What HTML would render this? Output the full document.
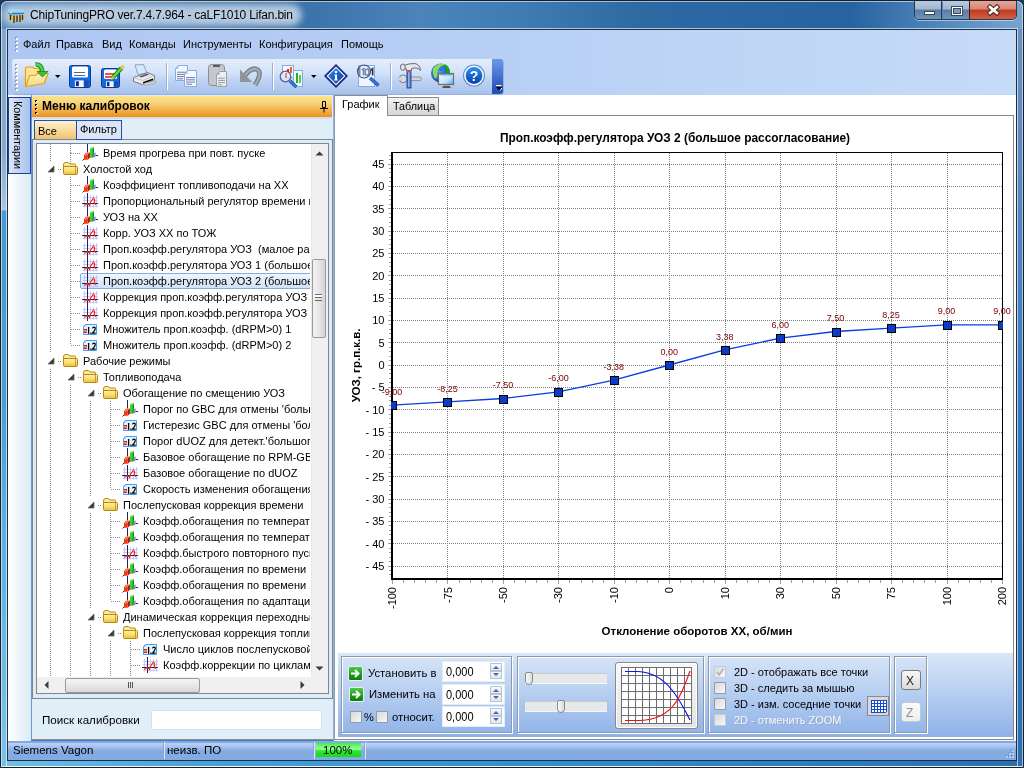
<!DOCTYPE html>
<html><head><meta charset="utf-8">
<style>
*{margin:0;padding:0;box-sizing:border-box}
html,body{width:1024px;height:768px;overflow:hidden;background:#1c3c60}
body{position:relative;font-family:"Liberation Sans",sans-serif;font-size:11px;color:#000}
.a{position:absolute}
.t{position:absolute;white-space:pre;line-height:1}
svg{position:absolute;overflow:visible}
</style></head><body>
<div class="a" style="left:0;top:0;width:1024px;height:768px;overflow:hidden;will-change:transform">
<div class="a" style="left:0;top:0;width:1024px;height:768px;background:#14202c;border-radius:7px 7px 4px 4px"></div>
<div class="a" style="left:1px;top:1px;width:1022px;height:766px;border-radius:6px 6px 3px 3px;background:#3a80c0"></div>
<div class="a" style="left:1px;top:1px;width:1022px;height:28px;border-radius:6px 6px 0 0;background:linear-gradient(to right,#5a8cbc 0px,#3a72aa 300px,#4a84bb 420px,#3f7cb4 520px,#2d69a3 640px,#2763a0 850px,#5b8fc3 960px,#7aa4cf 1022px)"></div>
<div class="a" style="left:2px;top:4px;width:300px;height:22px;border-radius:11px;background:#adc4dc;filter:blur(3px)"></div>
<div class="a" style="left:1px;top:29px;width:6px;height:738px;background:linear-gradient(#82a8d0 0px,#84aad2 120px,#a8c8e0 180px,#a8c8e0 181px,#4a98d0 182px,#4c9cd4 370px,#5ab0e0 500px,#80c0e8 738px)"></div>
<div class="a" style="left:1017px;top:29px;width:6px;height:738px;background:linear-gradient(#6a90c0 0px,#5a88c0 150px,#3478c0 400px,#2a70b0 738px)"></div>
<div class="a" style="left:1px;top:761px;width:1022px;height:6px;background:linear-gradient(to right,#70c0e8 0px,#4aa0d8 200px,#3590d0 500px,#2a70b0 1022px)"></div>
<div class="a" style="left:1px;top:1px;width:1022px;height:766px;border-radius:6px 6px 0 0;border:1px solid rgba(255,255,255,.55);border-bottom-color:rgba(255,255,255,.8)"></div>
<div class="a" style="left:6px;top:28px;width:1012px;height:739px;border:1px solid rgba(255,255,255,.6)"></div>
<div class="a" style="left:7px;top:29px;width:1010px;height:732px;border:1px solid #1a3048;background:linear-gradient(to right,#aec6f2,#b8d0f5 500px,#c6dbf8)"></div>
<svg style="left:0;top:0" width="40" height="30">
<path d="M8 10.5Q8 9 10 9H23L24 10.5V14H12L8 12.5z" fill="#9ad8f8"/><path d="M12 13.5H24" stroke="#1a7ee0" stroke-width="1.5"/>
<path d="M8 12.5L12 14V16L8 15z" fill="#4a9ad8"/>
<path d="M8.5 14V19M12.5 15V22M15.5 15V21M18.5 15V21M21.5 14.5V20M23.5 14V18" stroke="#f2c440" stroke-width="1.6"/>
<path d="M10.5 15V20M14 15.5V23M17 15.5V22M20 15V22M22.5 15V20" stroke="#2a2a2a" stroke-width="1.3"/>
</svg>
<div class="t" style="left:30px;top:9px;font-size:12px;letter-spacing:-0.2px;color:#000;text-shadow:0 0 8px rgba(255,255,255,.9)">ChipTuningPRO ver.7.4.7.964 - caLF1010 Lifan.bin</div>
<div class="a" style="left:914px;top:1px;width:103px;height:19px;border:1px solid #2a3a4c;border-top:none;border-radius:0 0 5px 5px;overflow:hidden;box-shadow:0 1px 0 rgba(255,255,255,.5)">
  <div class="a" style="left:0;top:0;width:27px;height:18px;background:linear-gradient(#b8cbe0 0%,#9fb6d0 45%,#587ca4 50%,#6f95bc 100%);border-right:1px solid #2a3a4c"></div>
  <div class="a" style="left:28px;top:0;width:27px;height:18px;background:linear-gradient(#b8cbe0 0%,#9fb6d0 45%,#587ca4 50%,#6f95bc 100%);border-right:1px solid #4a1a10"></div>
  <div class="a" style="left:55px;top:0;width:48px;height:18px;background:linear-gradient(#e8a496 0%,#d88676 45%,#c23a1c 50%,#d0604a 100%)"></div>
  <div class="a" style="left:9px;top:10px;width:11px;height:4px;background:#fff;border:1px solid #3a4a5a"></div>
  <div class="a" style="left:36px;top:5px;width:12px;height:10px;border:1px solid #3a4a5a;background:#fff"></div>
  <div class="a" style="left:38px;top:7px;width:8px;height:6px;border:1px solid #3a4a5a;background:#7b9bc0"></div>
</div>
<svg style="left:0;top:0" width="1024" height="30"><path d="M990 7L997 13M997 7L990 13" stroke="#4a2a24" stroke-width="4.6" stroke-linecap="square"/><path d="M990 7L997 13M997 7L990 13" stroke="#fff" stroke-width="2.6" stroke-linecap="square"/></svg>
<div class="a" style="left:15px;top:37px;width:2px;height:2px;background:#8a98ac"></div><div class="a" style="left:16px;top:38px;width:2px;height:2px;background:#fff"></div><div class="a" style="left:15px;top:41px;width:2px;height:2px;background:#8a98ac"></div><div class="a" style="left:16px;top:42px;width:2px;height:2px;background:#fff"></div><div class="a" style="left:15px;top:45px;width:2px;height:2px;background:#8a98ac"></div><div class="a" style="left:16px;top:46px;width:2px;height:2px;background:#fff"></div><div class="a" style="left:15px;top:49px;width:2px;height:2px;background:#8a98ac"></div><div class="a" style="left:16px;top:50px;width:2px;height:2px;background:#fff"></div><div class="t" style="left:23px;top:39px;font-size:11px">Файл</div><div class="t" style="left:56px;top:39px;font-size:11px">Правка</div><div class="t" style="left:102px;top:39px;font-size:11px">Вид</div><div class="t" style="left:129px;top:39px;font-size:11px">Команды</div><div class="t" style="left:183px;top:39px;font-size:11px">Инструменты</div><div class="t" style="left:259px;top:39px;font-size:11px">Конфигурация</div><div class="t" style="left:341px;top:39px;font-size:11px">Помощь</div><div class="a" style="left:12px;top:59px;width:491px;height:35px;border-radius:3px;background:linear-gradient(#e4eefb 0%,#d2e2f8 40%,#bfd4f4 60%,#a8c2ec 100%);box-shadow:1px 1px 0 rgba(120,150,200,.5)"></div><div class="a" style="left:492px;top:59px;width:11px;height:35px;border-radius:0 3px 3px 0;background:linear-gradient(#6b95d8,#2a56b0)"></div><div class="a" style="left:15px;top:64px;width:2px;height:2px;background:#8a98ac"></div><div class="a" style="left:16px;top:65px;width:2px;height:2px;background:#fff"></div><div class="a" style="left:15px;top:68px;width:2px;height:2px;background:#8a98ac"></div><div class="a" style="left:16px;top:69px;width:2px;height:2px;background:#fff"></div><div class="a" style="left:15px;top:72px;width:2px;height:2px;background:#8a98ac"></div><div class="a" style="left:16px;top:73px;width:2px;height:2px;background:#fff"></div><div class="a" style="left:15px;top:76px;width:2px;height:2px;background:#8a98ac"></div><div class="a" style="left:16px;top:77px;width:2px;height:2px;background:#fff"></div><div class="a" style="left:15px;top:80px;width:2px;height:2px;background:#8a98ac"></div><div class="a" style="left:16px;top:81px;width:2px;height:2px;background:#fff"></div><div class="a" style="left:15px;top:84px;width:2px;height:2px;background:#8a98ac"></div><div class="a" style="left:16px;top:85px;width:2px;height:2px;background:#fff"></div><div class="a" style="left:15px;top:88px;width:2px;height:2px;background:#8a98ac"></div><div class="a" style="left:16px;top:89px;width:2px;height:2px;background:#fff"></div><div class="a" style="left:166px;top:63px;width:1px;height:27px;background:#9ab0d0"></div><div class="a" style="left:167px;top:63px;width:1px;height:27px;background:#fff"></div><div class="a" style="left:272px;top:63px;width:1px;height:27px;background:#9ab0d0"></div><div class="a" style="left:273px;top:63px;width:1px;height:27px;background:#fff"></div><div class="a" style="left:390px;top:63px;width:1px;height:27px;background:#9ab0d0"></div><div class="a" style="left:391px;top:63px;width:1px;height:27px;background:#fff"></div><div class="a" style="left:8px;top:95px;width:23px;height:646px;background:linear-gradient(to right,#ffffff,#dde9f4)"></div><div class="a" style="left:8px;top:97px;width:23px;height:77px;border:1px solid #1d3f96;background:linear-gradient(to right,#dbe6f7,#a9c2ec)"></div><div class="t" style="left:23px;top:101px;font-size:10.8px;transform-origin:0 0;transform:rotate(90deg)">Комментарии</div><div class="a" style="left:31px;top:95px;width:302px;height:645px;background:#dfeef7;border-left:1px solid #6a95d8"></div><div class="a" style="left:32px;top:96px;width:300px;height:21px;background:linear-gradient(#fbe48c 0%,#f7d680 30%,#f2b854 60%,#ef9c28 90%,#ee9018 100%)"></div><div class="a" style="left:32px;top:117px;width:300px;height:2px;background:#cfe0f5"></div><div class="a" style="left:35px;top:100px;width:2px;height:2px;background:#000"></div><div class="a" style="left:36px;top:101px;width:2px;height:1px;background:#fff8d0"></div><div class="a" style="left:35px;top:104px;width:2px;height:2px;background:#000"></div><div class="a" style="left:36px;top:105px;width:2px;height:1px;background:#fff8d0"></div><div class="a" style="left:35px;top:108px;width:2px;height:2px;background:#000"></div><div class="a" style="left:36px;top:109px;width:2px;height:1px;background:#fff8d0"></div><div class="a" style="left:35px;top:112px;width:2px;height:2px;background:#000"></div><div class="a" style="left:36px;top:113px;width:2px;height:1px;background:#fff8d0"></div><div class="t" style="left:42px;top:100px;font-size:12px;font-weight:bold">Меню калибровок</div><svg style="left:319px;top:100px" width="10" height="13"><path d="M3.5 1.5h3v6h-3z M1 8.5h8 M5 8.5v4" stroke="#000" stroke-width="1" fill="none"/></svg><div class="a" style="left:34px;top:120px;width:43px;height:20px;border:1px solid #2a4da8;border-right:none;border-bottom:none;background:linear-gradient(#fdf2cc,#f7d590 60%,#f3c070)"></div><div class="t" style="left:38px;top:126px;font-size:11px">Все</div><div class="a" style="left:76px;top:120px;width:46px;height:20px;border:1px solid #2a4da8;background:#dae6f5"></div><div class="t" style="left:80px;top:124px;font-size:11px">Фильтр</div><div class="a" style="left:32px;top:139px;width:301px;height:560px;border:1px solid #80868e;border-bottom-width:1px;background:#dcecf8"></div><div class="a" style="left:36px;top:143px;width:293px;height:551px;border:1px solid #80868e;background:#fff"></div><div class="a" style="left:76px;top:139px;width:46px;height:1px;background:#2a4da8"></div><div class="t" style="left:42px;top:714px;font-size:11.6px">Поиск калибровки</div><div class="a" style="left:151px;top:710px;width:171px;height:20px;background:#fff;border:1px solid #d6e2ee"></div><div class="a" style="left:32px;top:739px;width:301px;height:1px;background:#8c8c8c"></div><div class="a" style="left:333px;top:95px;width:1px;height:646px;background:#98b0e8"></div><div class="a" style="left:334px;top:95px;width:682px;height:645px;background:#fff;border-left:1px solid #8e9bab"></div><div class="a" style="left:334px;top:740px;width:682px;height:1px;background:#eef4fc"></div><div class="a" style="left:31px;top:740px;width:303px;height:1px;background:#4a7ad0"></div><div class="a" style="left:8px;top:741px;width:1008px;height:19px;background:linear-gradient(#84a8e0 0px,#84a8e0 2px,#bcd4f6 2px,#a4c0ec 6px,#84aae2 10px,#84aae2 19px)"></div><div class="t" style="left:13px;top:745px;font-size:11.5px">Siemens Vagon</div><div class="t" style="left:167px;top:745px;font-size:11.5px">неизв. ПО</div><div class="a" style="left:163px;top:742px;width:1px;height:17px;background:#8aa6d0"></div><div class="a" style="left:164px;top:742px;width:1px;height:17px;background:#dce8fa"></div><div class="a" style="left:313px;top:742px;width:1px;height:17px;background:#8aa6d0"></div><div class="a" style="left:314px;top:742px;width:1px;height:17px;background:#dce8fa"></div><div class="a" style="left:364px;top:742px;width:1px;height:17px;background:#8aa6d0"></div><div class="a" style="left:365px;top:742px;width:1px;height:17px;background:#dce8fa"></div><div class="a" style="left:316px;top:743px;width:45px;height:14px;background:linear-gradient(#40f040,#9cff9c 45%,#2ee82e 55%,#1ad81a)"></div><div class="t" style="left:323px;top:745px;font-size:11.5px">100%</div><div class="a" style="left:1012px;top:750px;width:2px;height:2px;background:#b4caee;box-shadow:-1px -1px 0 #7496cc"></div><div class="a" style="left:1009px;top:753px;width:2px;height:2px;background:#b4caee;box-shadow:-1px -1px 0 #7496cc"></div><div class="a" style="left:1012px;top:753px;width:2px;height:2px;background:#b4caee;box-shadow:-1px -1px 0 #7496cc"></div><div class="a" style="left:1006px;top:756px;width:2px;height:2px;background:#b4caee;box-shadow:-1px -1px 0 #7496cc"></div><div class="a" style="left:1009px;top:756px;width:2px;height:2px;background:#b4caee;box-shadow:-1px -1px 0 #7496cc"></div><div class="a" style="left:1012px;top:756px;width:2px;height:2px;background:#b4caee;box-shadow:-1px -1px 0 #7496cc"></div><div class="a" style="left:387px;top:97px;width:52px;height:19px;border:1px solid #8a8a8a;border-left:none;background:linear-gradient(#f4f4f4,#e2e2e2 50%,#d6d6d6)"></div><div class="a" style="left:439px;top:115px;width:575px;height:1px;background:#8a8a8a"></div><div class="a" style="left:334px;top:95px;width:54px;height:21px;border:1px solid #8a8a8a;border-bottom:none;background:#fff"></div><div class="a" style="left:1013px;top:115px;width:1px;height:625px;background:#8a8a8a"></div><div class="a" style="left:334px;top:739px;width:680px;height:1px;background:#8a8a8a"></div><div class="t" style="left:342px;top:99px;font-size:11px">График</div><div class="t" style="left:393px;top:101px;font-size:10.8px">Таблица</div><svg style="left:0;top:0" width="1024" height="768" shape-rendering="crispEdges"><path d="M393 566.5H1002M393 543.5H1002M393 521.5H1002M393 499.5H1002M393 476.5H1002M393 454.5H1002M393 432.5H1002M393 409.5H1002M393 387.5H1002M393 365.5H1002M393 342.5H1002M393 320.5H1002M393 298.5H1002M393 275.5H1002M393 253.5H1002M393 231.5H1002M393 208.5H1002M393 186.5H1002M393 164.5H1002M447.5 153V578M503.5 153V578M558.5 153V578M614.5 153V578M669.5 153V578M725.5 153V578M780.5 153V578M836.5 153V578M891.5 153V578M947.5 153V578" stroke="#808080" stroke-width="1" stroke-dasharray="1 1" fill="none"/><path d="M389 574.5H391M389 570.5H391M388 566.5H391M389 561.5H391M389 557.5H391M389 552.5H391M389 548.5H391M388 543.5H391M389 539.5H391M389 534.5H391M389 530.5H391M389 525.5H391M388 521.5H391M389 516.5H391M389 512.5H391M389 507.5H391M389 503.5H391M388 499.5H391M389 494.5H391M389 490.5H391M389 485.5H391M389 481.5H391M388 476.5H391M389 472.5H391M389 467.5H391M389 463.5H391M389 458.5H391M388 454.5H391M389 449.5H391M389 445.5H391M389 440.5H391M389 436.5H391M388 432.5H391M389 427.5H391M389 423.5H391M389 418.5H391M389 414.5H391M388 409.5H391M389 405.5H391M389 400.5H391M389 396.5H391M389 391.5H391M388 387.5H391M389 382.5H391M389 378.5H391M389 373.5H391M389 369.5H391M388 365.5H391M389 360.5H391M389 356.5H391M389 351.5H391M389 347.5H391M388 342.5H391M389 338.5H391M389 333.5H391M389 329.5H391M389 324.5H391M388 320.5H391M389 315.5H391M389 311.5H391M389 306.5H391M389 302.5H391M388 298.5H391M389 293.5H391M389 289.5H391M389 284.5H391M389 280.5H391M388 275.5H391M389 271.5H391M389 266.5H391M389 262.5H391M389 257.5H391M388 253.5H391M389 248.5H391M389 244.5H391M389 239.5H391M389 235.5H391M388 231.5H391M389 226.5H391M389 222.5H391M389 217.5H391M389 213.5H391M388 208.5H391M389 204.5H391M389 199.5H391M389 195.5H391M389 190.5H391M388 186.5H391M389 181.5H391M389 177.5H391M389 172.5H391M389 168.5H391M388 164.5H391M389 159.5H391M389 155.5H391M392.5 580V584M403.5 580V583M414.5 580V583M425.5 580V583M436.5 580V583M447.5 580V584M459.5 580V583M470.5 580V583M481.5 580V583M492.5 580V583M503.5 580V584M514.5 580V583M525.5 580V583M536.5 580V583M547.5 580V583M558.5 580V584M569.5 580V583M581.5 580V583M592.5 580V583M603.5 580V583M614.5 580V584M625.5 580V583M636.5 580V583M647.5 580V583M658.5 580V583M669.5 580V584M680.5 580V583M691.5 580V583M703.5 580V583M714.5 580V583M725.5 580V584M736.5 580V583M747.5 580V583M758.5 580V583M769.5 580V583M780.5 580V584M791.5 580V583M802.5 580V583M813.5 580V583M825.5 580V583M836.5 580V584M847.5 580V583M858.5 580V583M869.5 580V583M880.5 580V583M891.5 580V584M902.5 580V583M913.5 580V583M924.5 580V583M935.5 580V583M947.5 580V584M958.5 580V583M969.5 580V583M980.5 580V583M991.5 580V583M1002.5 580V584" stroke="#a0a0a0" stroke-width="1" fill="none"/><path d="M391 152H1003M1002.5 152V580" stroke="#000" stroke-width="1" fill="none"/><rect x="391" y="152" width="2" height="428" fill="#000"/><rect x="391" y="578" width="612" height="2" fill="#000"/></svg><svg style="left:0;top:0" width="1024" height="768"><text x="675" y="142" font-family="Liberation Sans" font-size="11.9" font-weight="bold" text-anchor="middle">Проп.коэфф.регулятора УОЗ 2 (большое рассогласование)</text><text x="697" y="634.5" font-family="Liberation Sans" font-size="11.5" font-weight="bold" text-anchor="middle">Отклонение оборотов ХХ, об/мин</text><text transform="translate(360 365.4) rotate(-90)" font-family="Liberation Sans" font-size="11.5" font-weight="bold" text-anchor="middle">УОЗ, гр.п.к.в.</text><text x="384.5" y="570.0" font-family="Liberation Sans" font-size="11" text-anchor="end">- 45</text><text x="384.5" y="547.7" font-family="Liberation Sans" font-size="11" text-anchor="end">- 40</text><text x="384.5" y="525.3" font-family="Liberation Sans" font-size="11" text-anchor="end">- 35</text><text x="384.5" y="503.0" font-family="Liberation Sans" font-size="11" text-anchor="end">- 30</text><text x="384.5" y="480.7" font-family="Liberation Sans" font-size="11" text-anchor="end">- 25</text><text x="384.5" y="458.3" font-family="Liberation Sans" font-size="11" text-anchor="end">- 20</text><text x="384.5" y="436.0" font-family="Liberation Sans" font-size="11" text-anchor="end">- 15</text><text x="384.5" y="413.7" font-family="Liberation Sans" font-size="11" text-anchor="end">- 10</text><text x="384.5" y="391.3" font-family="Liberation Sans" font-size="11" text-anchor="end">- 5</text><text x="384.5" y="369.0" font-family="Liberation Sans" font-size="11" text-anchor="end">0</text><text x="384.5" y="346.7" font-family="Liberation Sans" font-size="11" text-anchor="end">5</text><text x="384.5" y="324.3" font-family="Liberation Sans" font-size="11" text-anchor="end">10</text><text x="384.5" y="302.0" font-family="Liberation Sans" font-size="11" text-anchor="end">15</text><text x="384.5" y="279.7" font-family="Liberation Sans" font-size="11" text-anchor="end">20</text><text x="384.5" y="257.3" font-family="Liberation Sans" font-size="11" text-anchor="end">25</text><text x="384.5" y="235.0" font-family="Liberation Sans" font-size="11" text-anchor="end">30</text><text x="384.5" y="212.7" font-family="Liberation Sans" font-size="11" text-anchor="end">35</text><text x="384.5" y="190.3" font-family="Liberation Sans" font-size="11" text-anchor="end">40</text><text x="384.5" y="168.0" font-family="Liberation Sans" font-size="11" text-anchor="end">45</text><text transform="translate(396.0 587) rotate(-90)" font-family="Liberation Sans" font-size="11" text-anchor="end">-100</text><text transform="translate(451.5 587) rotate(-90)" font-family="Liberation Sans" font-size="11" text-anchor="end">-75</text><text transform="translate(506.9 587) rotate(-90)" font-family="Liberation Sans" font-size="11" text-anchor="end">-50</text><text transform="translate(562.4 587) rotate(-90)" font-family="Liberation Sans" font-size="11" text-anchor="end">-30</text><text transform="translate(617.8 587) rotate(-90)" font-family="Liberation Sans" font-size="11" text-anchor="end">-10</text><text transform="translate(673.3 587) rotate(-90)" font-family="Liberation Sans" font-size="11" text-anchor="end">0</text><text transform="translate(728.7 587) rotate(-90)" font-family="Liberation Sans" font-size="11" text-anchor="end">10</text><text transform="translate(784.2 587) rotate(-90)" font-family="Liberation Sans" font-size="11" text-anchor="end">30</text><text transform="translate(839.6 587) rotate(-90)" font-family="Liberation Sans" font-size="11" text-anchor="end">50</text><text transform="translate(895.1 587) rotate(-90)" font-family="Liberation Sans" font-size="11" text-anchor="end">75</text><text transform="translate(950.5 587) rotate(-90)" font-family="Liberation Sans" font-size="11" text-anchor="end">100</text><text transform="translate(1006.0 587) rotate(-90)" font-family="Liberation Sans" font-size="11" text-anchor="end">200</text><polyline points="392.0,405.2 447.5,401.9 502.9,398.5 558.4,391.8 613.8,380.1 669.3,365.0 724.7,349.9 780.2,338.2 835.6,331.5 891.1,328.2 946.5,324.8 1002.0,324.8" fill="none" stroke="#0a3ce0" stroke-width="1.3"/></svg><svg style="left:0;top:0" width="1024" height="768" shape-rendering="crispEdges"><defs><clipPath id="pc"><rect x="391" y="152" width="612" height="428"/></clipPath></defs><g clip-path="url(#pc)"><rect x="388.5" y="401.5" width="8" height="8" fill="#0a3cc8" stroke="#000" stroke-width="1"/><rect x="443.5" y="398.5" width="8" height="8" fill="#0a3cc8" stroke="#000" stroke-width="1"/><rect x="499.5" y="395.5" width="8" height="8" fill="#0a3cc8" stroke="#000" stroke-width="1"/><rect x="554.5" y="388.5" width="8" height="8" fill="#0a3cc8" stroke="#000" stroke-width="1"/><rect x="610.5" y="376.5" width="8" height="8" fill="#0a3cc8" stroke="#000" stroke-width="1"/><rect x="665.5" y="361.5" width="8" height="8" fill="#0a3cc8" stroke="#000" stroke-width="1"/><rect x="721.5" y="346.5" width="8" height="8" fill="#0a3cc8" stroke="#000" stroke-width="1"/><rect x="776.5" y="334.5" width="8" height="8" fill="#0a3cc8" stroke="#000" stroke-width="1"/><rect x="832.5" y="328.5" width="8" height="8" fill="#0a3cc8" stroke="#000" stroke-width="1"/><rect x="887.5" y="324.5" width="8" height="8" fill="#0a3cc8" stroke="#000" stroke-width="1"/><rect x="943.5" y="321.5" width="8" height="8" fill="#0a3cc8" stroke="#000" stroke-width="1"/><rect x="998.5" y="321.5" width="8" height="8" fill="#0a3cc8" stroke="#000" stroke-width="1"/></g><text x="392.0" y="394.8" font-family="Liberation Sans" font-size="9" fill="#7a0000" text-anchor="middle" shape-rendering="auto">-9,00</text><text x="447.5" y="391.5" font-family="Liberation Sans" font-size="9" fill="#7a0000" text-anchor="middle" shape-rendering="auto">-8,25</text><text x="502.9" y="388.1" font-family="Liberation Sans" font-size="9" fill="#7a0000" text-anchor="middle" shape-rendering="auto">-7,50</text><text x="558.4" y="381.4" font-family="Liberation Sans" font-size="9" fill="#7a0000" text-anchor="middle" shape-rendering="auto">-6,00</text><text x="613.8" y="369.7" font-family="Liberation Sans" font-size="9" fill="#7a0000" text-anchor="middle" shape-rendering="auto">-3,38</text><text x="669.3" y="354.6" font-family="Liberation Sans" font-size="9" fill="#7a0000" text-anchor="middle" shape-rendering="auto">0,00</text><text x="724.7" y="339.5" font-family="Liberation Sans" font-size="9" fill="#7a0000" text-anchor="middle" shape-rendering="auto">3,38</text><text x="780.2" y="327.8" font-family="Liberation Sans" font-size="9" fill="#7a0000" text-anchor="middle" shape-rendering="auto">6,00</text><text x="835.6" y="321.1" font-family="Liberation Sans" font-size="9" fill="#7a0000" text-anchor="middle" shape-rendering="auto">7,50</text><text x="891.1" y="317.8" font-family="Liberation Sans" font-size="9" fill="#7a0000" text-anchor="middle" shape-rendering="auto">8,25</text><text x="946.5" y="314.4" font-family="Liberation Sans" font-size="9" fill="#7a0000" text-anchor="middle" shape-rendering="auto">9,00</text><text x="1002.0" y="314.4" font-family="Liberation Sans" font-size="9" fill="#7a0000" text-anchor="middle" shape-rendering="auto">9,00</text></svg><div class="a" style="left:338px;top:653px;width:675px;height:84px;background:linear-gradient(#d8e6f8 0%,#bcd2f2 40%,#8eb2e8 100%)"></div><div class="a" style="left:341px;top:656px;width:171px;height:77px;border:1px solid #8e98a8;box-shadow:inset 1px 1px 0 #fff,1px 1px 0 #fff"></div><div class="a" style="left:517px;top:656px;width:187px;height:77px;border:1px solid #8e98a8;box-shadow:inset 1px 1px 0 #fff,1px 1px 0 #fff"></div><div class="a" style="left:708px;top:656px;width:182px;height:77px;border:1px solid #8e98a8;box-shadow:inset 1px 1px 0 #fff,1px 1px 0 #fff"></div><div class="a" style="left:894px;top:656px;width:33px;height:77px;border:1px solid #8e98a8;box-shadow:inset 1px 1px 0 #fff,1px 1px 0 #fff"></div><div class="a" style="left:348px;top:666px;width:15px;height:15px;border-radius:2px;border:1px solid #e8f4e8;background:linear-gradient(#4cc84c,#1e9a1e 60%,#0c7e0c)"></div><svg style="left:348px;top:666px" width="15" height="15"><path d="M3 7.5H10M7 4L10.5 7.5L7 11" stroke="#fff" stroke-width="2" fill="none"/></svg><div class="a" style="left:349px;top:687px;width:15px;height:15px;border-radius:2px;border:1px solid #e8f4e8;background:linear-gradient(#4cc84c,#1e9a1e 60%,#0c7e0c)"></div><svg style="left:349px;top:687px" width="15" height="15"><path d="M3 7.5H10M7 4L10.5 7.5L7 11" stroke="#fff" stroke-width="2" fill="none"/></svg><div class="t" style="left:368px;top:668px;font-size:11.3px">Установить в</div><div class="t" style="left:369px;top:689px;font-size:11.3px">Изменить на</div><div class="a" style="left:350px;top:711px;width:12px;height:12px;border:1px solid #979ca4;background:linear-gradient(135deg,#d8dadc,#f6f7f8)"></div><div class="t" style="left:364px;top:712px;font-size:11px">%</div><div class="a" style="left:376px;top:711px;width:12px;height:12px;border:1px solid #979ca4;background:linear-gradient(135deg,#d8dadc,#f6f7f8)"></div><div class="t" style="left:392px;top:712px;font-size:11.3px">относит.</div><div class="a" style="left:442px;top:661px;width:63px;height:21px;background:#fff;border:1px solid #e4ecf4"></div><div class="t" style="left:446px;top:666px;font-size:11px;transform:scaleY(1.08);transform-origin:0 0">0,000</div><div class="a" style="left:490px;top:663px;width:12px;height:8px;border:1px solid #b8c4d4;background:linear-gradient(#f8fafc,#dde4ee)"></div><div class="a" style="left:490px;top:671px;width:12px;height:8px;border:1px solid #b8c4d4;background:linear-gradient(#f8fafc,#dde4ee)"></div><svg style="left:490px;top:663px" width="12" height="16"><path d="M3 6L6 3L9 6z M3 10L6 13L9 10z" fill="#4a64b0"/></svg><div class="a" style="left:442px;top:684px;width:63px;height:21px;background:#fff;border:1px solid #e4ecf4"></div><div class="t" style="left:446px;top:689px;font-size:11px;transform:scaleY(1.08);transform-origin:0 0">0,000</div><div class="a" style="left:490px;top:686px;width:12px;height:8px;border:1px solid #b8c4d4;background:linear-gradient(#f8fafc,#dde4ee)"></div><div class="a" style="left:490px;top:694px;width:12px;height:8px;border:1px solid #b8c4d4;background:linear-gradient(#f8fafc,#dde4ee)"></div><svg style="left:490px;top:686px" width="12" height="16"><path d="M3 6L6 3L9 6z M3 10L6 13L9 10z" fill="#4a64b0"/></svg><div class="a" style="left:442px;top:706px;width:63px;height:21px;background:#fff;border:1px solid #e4ecf4"></div><div class="t" style="left:446px;top:711px;font-size:11px;transform:scaleY(1.08);transform-origin:0 0">0,000</div><div class="a" style="left:490px;top:708px;width:12px;height:8px;border:1px solid #b8c4d4;background:linear-gradient(#f8fafc,#dde4ee)"></div><div class="a" style="left:490px;top:716px;width:12px;height:8px;border:1px solid #b8c4d4;background:linear-gradient(#f8fafc,#dde4ee)"></div><svg style="left:490px;top:708px" width="12" height="16"><path d="M3 6L6 3L9 6z M3 10L6 13L9 10z" fill="#4a64b0"/></svg><div class="a" style="left:525px;top:673px;width:82px;height:11px;background:#e6e8ea;border-top:1px solid #c8ccd0;border-bottom:1px solid #f4f6f8"></div><div class="a" style="left:525px;top:672px;width:8px;height:13px;border:1px solid #8a8a8a;border-radius:2px 2px 4px 4px;background:linear-gradient(to right,#fafafa,#dadada)"></div><div class="a" style="left:525px;top:701px;width:82px;height:11px;background:#e6e8ea;border-top:1px solid #c8ccd0;border-bottom:1px solid #f4f6f8"></div><div class="a" style="left:557px;top:700px;width:8px;height:13px;border:1px solid #8a8a8a;border-radius:2px 2px 4px 4px;background:linear-gradient(to right,#fafafa,#dadada)"></div><div class="a" style="left:615px;top:662px;width:83px;height:67px;border:1px solid #8a8a8a;border-radius:3px;background:linear-gradient(#f8f8f8,#e4e4e4);box-shadow:inset 0 0 0 1px #fff"></div><svg style="left:0;top:0" width="1024" height="768"><rect x="621" y="667" width="71" height="56" fill="#fff"/><path d="M621.5 667V723M628.5 667V723M635.5 667V723M642.5 667V723M649.5 667V723M656.5 667V723M663.5 667V723M670.5 667V723M677.5 667V723M684.5 667V723M691.5 667V723M621 667.5H692M621 675.5H692M621 683.5H692M621 691.5H692M621 699.5H692M621 707.5H692M621 715.5H692M621 723.5H692" stroke="#6e6e6e" stroke-width="1" shape-rendering="crispEdges"/><path d="M625 671.5H638C652 672 664 680 672 690C680 700 686 712 690 720" stroke="#1010e8" stroke-width="1.2" fill="none"/><path d="M625 720.5H640C655 720 668 714 676 702C682 694 686 682 690 671" stroke="#f01010" stroke-width="1.2" fill="none"/></svg><div class="a" style="left:714px;top:666px;width:12px;height:12px;border:1px solid #c4ccd8;background:linear-gradient(135deg,#d8dadc,#f6f7f8)"></div><svg style="left:714px;top:666px" width="12" height="12"><path d="M3 6L5 9L9.5 2.5" stroke="#a8b0bc" stroke-width="1.5" fill="none"/></svg><div class="t" style="left:734px;top:667px;font-size:11px;color:#000">2D - отображать все точки</div><div class="a" style="left:714px;top:682px;width:12px;height:12px;border:1px solid #979ca4;background:linear-gradient(135deg,#d8dadc,#f6f7f8)"></div><div class="t" style="left:734px;top:683px;font-size:11px;color:#000">3D - следить за мышью</div><div class="a" style="left:714px;top:698px;width:12px;height:12px;border:1px solid #979ca4;background:linear-gradient(135deg,#d8dadc,#f6f7f8)"></div><div class="t" style="left:734px;top:699px;font-size:11px;color:#000">3D - изм. соседние точки</div><div class="a" style="left:714px;top:714px;width:12px;height:12px;border:1px solid #c4ccd8;background:linear-gradient(135deg,#d8dadc,#f6f7f8)"></div><div class="t" style="left:734px;top:715px;font-size:11px;color:#f4f8ff;text-shadow:1px 1px 0 #9aa8bc">2D - отменить ZOOM</div><div class="a" style="left:867px;top:696px;width:22px;height:20px;border:1px solid #8a8a8a;background:#d8d8d8"></div><svg style="left:0;top:0" width="1024" height="768"><rect x="871" y="700" width="15" height="12" fill="#fff"/><path d="M871.5 700V712M874.5 700V712M877.5 700V712M880.5 700V712M883.5 700V712M886.5 700V712M871 700.5H886M871 703.5H886M871 706.5H886M871 709.5H886M871 712.5H886" stroke="#1848d0" stroke-width="1.2" shape-rendering="crispEdges"/></svg><div class="a" style="left:901px;top:670px;width:20px;height:20px;border:1px solid #7a7a7a;border-radius:3px;background:linear-gradient(#f6f6f6,#dcdcdc)"></div><div class="t" style="left:906px;top:675px;font-size:12px;color:#222">X</div><div class="a" style="left:901px;top:702px;width:20px;height:20px;border:1px solid #c0c8d4;border-radius:3px;background:linear-gradient(#fafafa,#eeeeee)"></div><div class="t" style="left:906px;top:707px;font-size:12px;color:#8a9098">Z</div><svg style="left:0;top:0" width="1024" height="768"><defs><linearGradient id="tbfold" x1="0" y1="0" x2="0" y2="1"><stop offset="0" stop-color="#fdf0b8"/><stop offset="1" stop-color="#f6d880"/></linearGradient><linearGradient id="blu" x1="0" y1="0" x2="1" y2="1"><stop offset="0" stop-color="#2a8cf0"/><stop offset="1" stop-color="#0a3aa8"/></linearGradient><linearGradient id="scr" x1="0" y1="0" x2="1" y2="1"><stop offset="0" stop-color="#f8fcff"/><stop offset="0.6" stop-color="#c0e4fc"/><stop offset="1" stop-color="#3aa8f0"/></linearGradient><radialGradient id="glob" cx="0.35" cy="0.35" r="0.7"><stop offset="0" stop-color="#5ab0ff"/><stop offset="1" stop-color="#0a38a0"/></radialGradient><linearGradient id="tbend" x1="0" y1="0" x2="0" y2="1"><stop offset="0" stop-color="#6a98e8"/><stop offset="1" stop-color="#1e4cb4"/></linearGradient><linearGradient id="hlp" x1="0" y1="0" x2="0" y2="1"><stop offset="0" stop-color="#2a90f2"/><stop offset="1" stop-color="#0840a8"/></linearGradient></defs><g transform="translate(22 60)"><path d="M3.5 26V8.5Q3.5 7 5 7H10.5L12 8.5H17.5V13" fill="#fbe49a" stroke="#e8a010" stroke-width="1.2"/><path d="M3.8 26.5L7.5 15.5H13L16 13.5H26L22 23.5z" fill="url(#tbfold)" stroke="#e8a010" stroke-width="1.2"/><path d="M13.5 4.5Q19.5 4 20.5 11.5" stroke="#1a9a1a" stroke-width="4.5" fill="none"/><path d="M13.5 4.5Q19.5 4 20.5 11.5" stroke="#5ad25a" stroke-width="2.2" fill="none"/><path d="M15 11.5H26L20.5 17z" fill="#3cc03c" stroke="#108a10" stroke-width="0.8"/></g><path d="M55 75H60.5L57.75 78z" fill="#000"/><path d="M311 75H316.5L313.75 78z" fill="#000"/><g transform="translate(69 65)"><rect x="0.5" y="0.5" width="21" height="22" rx="2" fill="#0c6ee0" stroke="#22308a" stroke-width="1"/><rect x="3" y="1.5" width="16" height="11.0" rx="1.5" fill="#fff"/><path d="M5 7.5H16M5 10.5H16" stroke="#6060b0" stroke-width="1"/><rect x="5.880000000000001" y="15.399999999999999" width="8.82" height="6.6" fill="#f4f8ff"/><rect x="6.930000000000001" y="16.28" width="2.9400000000000004" height="4.84" fill="#1a2a8a"/><rect x="15.12" y="15.399999999999999" width="4.62" height="6.16" fill="#1a3a9a" opacity="0.6"/></g><g transform="translate(101 68)"><rect x="0.5" y="0.5" width="18" height="19" rx="2" fill="#0c6ee0" stroke="#22308a" stroke-width="1"/><rect x="3" y="1.5" width="13" height="9.5" rx="1.5" fill="#fff"/><path d="M4 6H13M4 9H13" stroke="#e81a10" stroke-width="1.4"/><rect x="5.040000000000001" y="13.299999999999999" width="7.56" height="5.7" fill="#f4f8ff"/><rect x="5.94" y="14.06" width="2.5200000000000005" height="4.18" fill="#1a2a8a"/><rect x="12.959999999999999" y="13.299999999999999" width="3.96" height="5.32" fill="#1a3a9a" opacity="0.6"/></g><path d="M112.5 78L121.5 68" stroke="#1a8a1a" stroke-width="4.2"/><path d="M112.5 78L121.5 68" stroke="#6ad84a" stroke-width="2.2"/><path d="M120.5 66L123.5 64.5L124.5 67.5L122.5 69.5z" fill="#f0c070"/><path d="M111 80L112 76L114.5 78.5z" fill="#f0b060"/><g transform="translate(130 60)"><path d="M5 5L13.5 4.5L17 13L8 14.5z" fill="#d4eaff" stroke="#8a8ab0" stroke-width="0.8"/><path d="M3.5 17.5L17.5 12.5L24.5 15.5V19.5L12.5 24.5L3.5 21.5z" fill="#ececec" stroke="#7a7a7a" stroke-width="1"/><path d="M3.5 17.5L12.5 20.5L24.5 15.5" fill="none" stroke="#b8b8b8" stroke-width="0.8"/><path d="M9 16.5L17 13.5L19.5 14.5L11.5 17.5z" fill="#5a5a7a"/><path d="M13 22L23 18.5V20L13 23.5z" fill="#000"/><path d="M14 23.5L25.5 21V23L15 25.5z" fill="#e4e4e4" stroke="#8a8a8a" stroke-width="0.6"/></g><path d="M178.5 65.5H187.5V80.5H175.5V69z" fill="#f4faff" stroke="#84aee0" stroke-width="1"/><path d="M175.5 69H178.5V65.5" fill="#84aee0" opacity="0.7"/><path d="M177 72.22H186" stroke="#4a4a9a" stroke-width="1" opacity="0.75"/><path d="M177 74.42H186" stroke="#4a4a9a" stroke-width="1" opacity="0.75"/><path d="M177 76.62H186" stroke="#4a4a9a" stroke-width="1" opacity="0.75"/><path d="M177 78.82H183" stroke="#4a4a9a" stroke-width="1" opacity="0.75"/><path d="M187.5 70.5H196.5V86.5H184.5V74z" fill="#f4faff" stroke="#84aee0" stroke-width="1"/><path d="M184.5 74H187.5V70.5" fill="#84aee0" opacity="0.7"/><path d="M186 77.64H195" stroke="#4a4a9a" stroke-width="1" opacity="0.75"/><path d="M186 79.84H195" stroke="#4a4a9a" stroke-width="1" opacity="0.75"/><path d="M186 82.04H195" stroke="#4a4a9a" stroke-width="1" opacity="0.75"/><path d="M186 84.24H192" stroke="#4a4a9a" stroke-width="1" opacity="0.75"/><rect x="208.5" y="64.5" width="16" height="21" rx="3" fill="#c4c8cc" stroke="#8a9098" stroke-width="1"/><path d="M213 66H220" stroke="#5a5e64" stroke-width="2"/><path d="M219.5 71.5H226.5V86.5H216.5V75z" fill="#eceef0" stroke="#9aa0a8" stroke-width="1"/><path d="M216.5 75H219.5V71.5" fill="#9aa0a8" opacity="0.7"/><path d="M218 78.22H225" stroke="#7a7e84" stroke-width="1" opacity="0.75"/><path d="M218 80.42H225" stroke="#7a7e84" stroke-width="1" opacity="0.75"/><path d="M218 82.62H225" stroke="#7a7e84" stroke-width="1" opacity="0.75"/><path d="M218 84.82H222" stroke="#7a7e84" stroke-width="1" opacity="0.75"/><path d="M244.5 76Q252 66 258 70Q262 74 255 85" stroke="#7e848c" stroke-width="5" fill="none"/><path d="M244.5 76Q252 66 258 70Q262 74 255 85" stroke="#a8aeb4" stroke-width="2" fill="none"/><path d="M240 69.5V82H252z" fill="#8e949a"/><g transform="translate(277 60)"><rect x="5.5" y="5.5" width="11" height="12" fill="#f4faff" stroke="#84aee0"/><rect x="10" y="9" width="2" height="4" fill="#f02010"/><rect x="13" y="7" width="2" height="6" fill="#f06020"/><rect x="16.5" y="10.5" width="9" height="16" fill="#f4faff" stroke="#84aee0"/><rect x="19" y="13" width="2" height="10" fill="#20b020"/><rect x="22" y="15" width="2" height="8" fill="#50d040"/><path d="M13 21L19.5 27" stroke="#1a4ab0" stroke-width="3.2"/><path d="M13 21L19.5 27" stroke="#3a8ae8" stroke-width="1.4"/><circle cx="8.5" cy="16.5" r="5.3" fill="#d8f0ff" fill-opacity="0.75" stroke="#5a5a8a" stroke-width="1.2"/><rect x="8" y="13" width="2" height="5" fill="#f08070"/></g><path d="M336 64L348 76L336 88L324 76z" fill="#1a2a7a"/><path d="M336 66.5L345.5 76L336 85.5L326.5 76z" fill="#fff"/><path d="M336 68L344 76L336 84L328 76z" fill="url(#blu)"/><circle cx="336" cy="72" r="1.3" fill="#fff"/><path d="M334.5 74.5H337V79.5H338V80.5H334V79.5H335V75.5H334.5z" fill="#fff"/><rect x="358.5" y="65.5" width="16" height="21" fill="#eef6ff" stroke="#84aee0"/><path d="M357.8 70.2L359.6 68.8V75.5M361.8 70.2L363.6 68.8V75.5M370.8 70.2L372.6 68.8V75.5" stroke="#26365e" stroke-width="1.7" fill="none"/><ellipse cx="367" cy="72.2" rx="1.9" ry="3.1" stroke="#26365e" stroke-width="1.5" fill="none"/><path d="M370 78L378.5 85.5" stroke="#1a4ab0" stroke-width="3.4"/><path d="M370 78L378.5 85.5" stroke="#3a8ae8" stroke-width="1.4"/><circle cx="364" cy="71.5" r="6.5" fill="#d8f0ff" fill-opacity="0.45" stroke="#4a4a7a" stroke-width="1.2"/><rect x="404.5" y="77" width="16.5" height="3.6" rx="1" fill="#d6d6d8" stroke="#86868c" stroke-width="0.9"/><circle cx="403.2" cy="78.8" r="3.9" fill="#dcdcde" stroke="#76767e" stroke-width="1"/><rect x="398.5" y="77.4" width="4" height="2.8" fill="#c4d6f2"/><rect x="407" y="70.5" width="4" height="17.5" fill="#3a7ae0" stroke="#34447a" stroke-width="0.9"/><rect x="408.2" y="72" width="1.3" height="15" fill="#9cc4f4"/><rect x="407" y="70.5" width="4" height="1.6" fill="#f04a20"/><path d="M404.5 65.2Q410 63.2 415 63.6Q420 64.5 420.5 70.5Q418.5 67.8 415.5 67.8L411.5 68.5V70.5H406.5V68.8L404.5 69z" fill="#e8e8ec" stroke="#6a6a78" stroke-width="1"/><ellipse cx="402.8" cy="67.2" rx="2.4" ry="3.2" fill="#e4e4e8" stroke="#6a6a78" stroke-width="1"/><circle cx="440.5" cy="73" r="9.5" fill="url(#glob)"/><path d="M433 69Q435 65 440 63.8Q443 63.5 446 64.5Q443 65.5 441 66Q439 68 437.5 70Q436.5 73 437.5 76L435.5 79Q433 76 433 73z" fill="#8ae048"/><path d="M445 64.2Q449.5 66 450 72.5L446.5 73.5Q447 70 445.5 67.5L443.5 66z" fill="#18a818"/><path d="M438 70Q440 66.5 443 67L444 70L441 71z" fill="#2a78e8"/><rect x="438.5" y="73.5" width="15" height="11" fill="url(#scr)" stroke="#7a6e62" stroke-width="1.2"/><path d="M439.5 74.8H452.5" stroke="#2a90f0" stroke-width="1"/><path d="M442 88H451L449.5 85.8H443.5z" fill="#5a5450"/><circle cx="474" cy="75.5" r="11" fill="#5a8ad0"/><circle cx="474" cy="75.5" r="9.9" fill="#fff"/><circle cx="474" cy="75.5" r="8.4" fill="url(#hlp)"/><text x="474" y="80.8" font-family="Liberation Sans" font-size="14" font-weight="bold" fill="#fff" text-anchor="middle">?</text><path d="M492.5 59H500.5Q503 59 503 62V90Q503 93 500.5 93H492.5z" fill="url(#tbend)"/><path d="M496 85.5H501.5" stroke="#fff" stroke-width="1"/><path d="M496 87H502L499 90.5z" fill="#000"/><path d="M500 90.5L502 88" stroke="#fff" stroke-width="1"/></svg><div class="a" style="left:37px;top:144px;width:273px;height:532px;overflow:hidden;background:#fff"><svg style="left:-37px;top:-144px" width="1024" height="768" shape-rendering="crispEdges"><defs><linearGradient id="fg" x1="0" y1="0" x2="0" y2="1"><stop offset="0" stop-color="#fff4b0"/><stop offset="0.5" stop-color="#fbe070"/><stop offset="1" stop-color="#e8c040"/></linearGradient><linearGradient id="selg" x1="0" y1="0" x2="0" y2="1"><stop offset="0" stop-color="#f0f6fe"/><stop offset="1" stop-color="#cfe1f8"/></linearGradient></defs><rect x="80.5" y="273.5" width="240" height="15" rx="2" fill="url(#selg)" stroke="#84acdd" stroke-width="1"/><path d="M70.5 153V169M50.5 169V361M70.5 185V201M70.5 201V217M70.5 217V233M70.5 233V249M70.5 249V265M70.5 265V281M70.5 281V297M70.5 297V313M70.5 313V329M70.5 329V345M90.5 393V505M110.5 409V425M110.5 425V441M110.5 441V457M110.5 457V473M110.5 473V489M90.5 505V617M110.5 521V537M110.5 537V553M110.5 553V569M110.5 569V585M110.5 585V601M130.5 649V665M50.5 144V169M50.5 361V676M70.5 144V153M70.5 377V676M90.5 617V676M110.5 633V676M130.5 649V676M71 153.5H81M58 169.5H61M70.5 177V185M71 185.5H81M71 201.5H81M71 217.5H81M71 233.5H81M71 249.5H81M71 265.5H81M71 281.5H81M71 297.5H81M71 313.5H81M71 329.5H81M71 345.5H81M58 361.5H61M78 377.5H81M98 393.5H101M110.5 401V409M111 409.5H121M111 425.5H121M111 441.5H121M111 457.5H121M111 473.5H121M111 489.5H121M98 505.5H101M110.5 513V521M111 521.5H121M111 537.5H121M111 553.5H121M111 569.5H121M111 585.5H121M111 601.5H121M98 617.5H101M118 633.5H121M130.5 641V649M131 649.5H141M131 665.5H141" stroke="#8a8a8a" stroke-width="1" stroke-dasharray="1 1" fill="none"/><g shape-rendering="auto"><g transform="translate(82 145)"><path d="M5.5 -1V7.5M0.5 15.5L2.2 13.8M13.5 10.5H16" stroke="#1c2468" stroke-width="1"/><path d="M8 3.5L9.5 2H12V11.5L10.5 12.8H8z" fill="#3cd23c"/><path d="M10.5 3.5L12 2V11.5L10.5 12.8z" fill="#0e9a0e"/><path d="M8 3.5L9.5 2H12L10.5 3.5z" fill="#90ff90"/><path d="M11.6 8.6L13.6 7.3V11.5L11.6 12.8z" fill="#8888ee"/><path d="M2 9.6H5.5V14.8H2z" fill="#ff3a0a"/><path d="M2 9.6L4.2 7.5H8L5.5 9.6z" fill="#ff6a3a"/><path d="M5.5 9.6L8 7.5V12.8L5.5 14.8z" fill="#b81a06"/></g></g><rect x="47" y="161" width="8" height="16" fill="#fff"/><path d="M54 166V172H48z" fill="#3a3a3a" stroke="#6a6a6a" stroke-width="0.8" shape-rendering="auto"/><g shape-rendering="auto"><g transform="translate(62 161)"><path d="M1.5 3.5Q1.5 1.5 3.5 1.5H6.5L8 3H12.5Q13.5 3 13.5 4V5.5H1.5z" fill="#fbe69a" stroke="#b88a10" stroke-width="1"/><path d="M1.5 5.5H14.5Q15.5 5.5 15.5 6.5V12.5Q15.5 13.5 14.5 13.5H2.5Q1.5 13.5 1.5 12.5z" fill="url(#fg)" stroke="#b88a10" stroke-width="1"/><path d="M13.5 6V13" stroke="#c89c28" stroke-width="1"/></g></g><g shape-rendering="auto"><g transform="translate(82 177)"><path d="M5.5 -1V7.5M0.5 15.5L2.2 13.8M13.5 10.5H16" stroke="#1c2468" stroke-width="1"/><path d="M8 3.5L9.5 2H12V11.5L10.5 12.8H8z" fill="#3cd23c"/><path d="M10.5 3.5L12 2V11.5L10.5 12.8z" fill="#0e9a0e"/><path d="M8 3.5L9.5 2H12L10.5 3.5z" fill="#90ff90"/><path d="M11.6 8.6L13.6 7.3V11.5L11.6 12.8z" fill="#8888ee"/><path d="M2 9.6H5.5V14.8H2z" fill="#ff3a0a"/><path d="M2 9.6L4.2 7.5H8L5.5 9.6z" fill="#ff6a3a"/><path d="M5.5 9.6L8 7.5V12.8L5.5 14.8z" fill="#b81a06"/></g></g><g shape-rendering="auto"><g transform="translate(82 193)"><path d="M2.5 2V14.6M5.5 2V14.6M8.5 2V14.6M11.5 2V14.6M14.5 2V14.6M1 4.5H16M1 7.5H16M1 10.5H16M1 13.5H16" stroke="#c8c8fa" stroke-width="1"/><path d="M5.5 0V16M0 10.5H16" stroke="#1c2468" stroke-width="1"/><path d="M2.2 12.5L5.4 10.5L7.5 12.5L8.4 9.4L9.5 7.6L11.4 5.2L12.6 6.5L12.6 10.5L13.6 11.8" stroke="#ff2a00" stroke-width="1.1" fill="none"/></g></g><g shape-rendering="auto"><g transform="translate(82 209)"><path d="M5.5 -1V7.5M0.5 15.5L2.2 13.8M13.5 10.5H16" stroke="#1c2468" stroke-width="1"/><path d="M8 3.5L9.5 2H12V11.5L10.5 12.8H8z" fill="#3cd23c"/><path d="M10.5 3.5L12 2V11.5L10.5 12.8z" fill="#0e9a0e"/><path d="M8 3.5L9.5 2H12L10.5 3.5z" fill="#90ff90"/><path d="M11.6 8.6L13.6 7.3V11.5L11.6 12.8z" fill="#8888ee"/><path d="M2 9.6H5.5V14.8H2z" fill="#ff3a0a"/><path d="M2 9.6L4.2 7.5H8L5.5 9.6z" fill="#ff6a3a"/><path d="M5.5 9.6L8 7.5V12.8L5.5 14.8z" fill="#b81a06"/></g></g><g shape-rendering="auto"><g transform="translate(82 225)"><path d="M2.5 2V14.6M5.5 2V14.6M8.5 2V14.6M11.5 2V14.6M14.5 2V14.6M1 4.5H16M1 7.5H16M1 10.5H16M1 13.5H16" stroke="#c8c8fa" stroke-width="1"/><path d="M5.5 0V16M0 10.5H16" stroke="#1c2468" stroke-width="1"/><path d="M2.2 12.5L5.4 10.5L7.5 12.5L8.4 9.4L9.5 7.6L11.4 5.2L12.6 6.5L12.6 10.5L13.6 11.8" stroke="#ff2a00" stroke-width="1.1" fill="none"/></g></g><g shape-rendering="auto"><g transform="translate(82 241)"><path d="M2.5 2V14.6M5.5 2V14.6M8.5 2V14.6M11.5 2V14.6M14.5 2V14.6M1 4.5H16M1 7.5H16M1 10.5H16M1 13.5H16" stroke="#c8c8fa" stroke-width="1"/><path d="M5.5 0V16M0 10.5H16" stroke="#1c2468" stroke-width="1"/><path d="M2.2 12.5L5.4 10.5L7.5 12.5L8.4 9.4L9.5 7.6L11.4 5.2L12.6 6.5L12.6 10.5L13.6 11.8" stroke="#ff2a00" stroke-width="1.1" fill="none"/></g></g><g shape-rendering="auto"><g transform="translate(82 257)"><path d="M2.5 2V14.6M5.5 2V14.6M8.5 2V14.6M11.5 2V14.6M14.5 2V14.6M1 4.5H16M1 7.5H16M1 10.5H16M1 13.5H16" stroke="#c8c8fa" stroke-width="1"/><path d="M5.5 0V16M0 10.5H16" stroke="#1c2468" stroke-width="1"/><path d="M2.2 12.5L5.4 10.5L7.5 12.5L8.4 9.4L9.5 7.6L11.4 5.2L12.6 6.5L12.6 10.5L13.6 11.8" stroke="#ff2a00" stroke-width="1.1" fill="none"/></g></g><g shape-rendering="auto"><g transform="translate(82 273)"><path d="M2.5 2V14.6M5.5 2V14.6M8.5 2V14.6M11.5 2V14.6M14.5 2V14.6M1 4.5H16M1 7.5H16M1 10.5H16M1 13.5H16" stroke="#c8c8fa" stroke-width="1"/><path d="M5.5 0V16M0 10.5H16" stroke="#1c2468" stroke-width="1"/><path d="M2.2 12.5L5.4 10.5L7.5 12.5L8.4 9.4L9.5 7.6L11.4 5.2L12.6 6.5L12.6 10.5L13.6 11.8" stroke="#ff2a00" stroke-width="1.1" fill="none"/></g></g><g shape-rendering="auto"><g transform="translate(82 289)"><path d="M2.5 2V14.6M5.5 2V14.6M8.5 2V14.6M11.5 2V14.6M14.5 2V14.6M1 4.5H16M1 7.5H16M1 10.5H16M1 13.5H16" stroke="#c8c8fa" stroke-width="1"/><path d="M5.5 0V16M0 10.5H16" stroke="#1c2468" stroke-width="1"/><path d="M2.2 12.5L5.4 10.5L7.5 12.5L8.4 9.4L9.5 7.6L11.4 5.2L12.6 6.5L12.6 10.5L13.6 11.8" stroke="#ff2a00" stroke-width="1.1" fill="none"/></g></g><g shape-rendering="auto"><g transform="translate(82 305)"><path d="M2.5 2V14.6M5.5 2V14.6M8.5 2V14.6M11.5 2V14.6M14.5 2V14.6M1 4.5H16M1 7.5H16M1 10.5H16M1 13.5H16" stroke="#c8c8fa" stroke-width="1"/><path d="M5.5 0V16M0 10.5H16" stroke="#1c2468" stroke-width="1"/><path d="M2.2 12.5L5.4 10.5L7.5 12.5L8.4 9.4L9.5 7.6L11.4 5.2L12.6 6.5L12.6 10.5L13.6 11.8" stroke="#ff2a00" stroke-width="1.1" fill="none"/></g></g><g shape-rendering="auto"><g transform="translate(82 321)"><path d="M3.5 3.5H14.5V13.5H1.5V5.5z" fill="#e4f2ff" stroke="#3ba0f4" stroke-width="1"/><path d="M1.5 5.5L3.5 3.5V5.5z" fill="#3ba0f4"/><rect x="2" y="8" width="3" height="1.5" fill="#f01010"/><rect x="2" y="10.5" width="3" height="1.5" fill="#f01010"/><path d="M6.6 6V12.8" stroke="#000" stroke-width="1.3"/><rect x="8.2" y="11.5" width="1.3" height="1.3" fill="#000"/><path d="M10.4 7.4Q10.8 6.2 12 6.2Q13.4 6.3 13.3 7.7Q13.2 8.8 10.5 12.2H13.7" stroke="#000" stroke-width="1.2" fill="none"/></g></g><g shape-rendering="auto"><g transform="translate(82 337)"><path d="M3.5 3.5H14.5V13.5H1.5V5.5z" fill="#e4f2ff" stroke="#3ba0f4" stroke-width="1"/><path d="M1.5 5.5L3.5 3.5V5.5z" fill="#3ba0f4"/><rect x="2" y="8" width="3" height="1.5" fill="#f01010"/><rect x="2" y="10.5" width="3" height="1.5" fill="#f01010"/><path d="M6.6 6V12.8" stroke="#000" stroke-width="1.3"/><rect x="8.2" y="11.5" width="1.3" height="1.3" fill="#000"/><path d="M10.4 7.4Q10.8 6.2 12 6.2Q13.4 6.3 13.3 7.7Q13.2 8.8 10.5 12.2H13.7" stroke="#000" stroke-width="1.2" fill="none"/></g></g><rect x="47" y="353" width="8" height="16" fill="#fff"/><path d="M54 358V364H48z" fill="#3a3a3a" stroke="#6a6a6a" stroke-width="0.8" shape-rendering="auto"/><g shape-rendering="auto"><g transform="translate(62 353)"><path d="M1.5 3.5Q1.5 1.5 3.5 1.5H6.5L8 3H12.5Q13.5 3 13.5 4V5.5H1.5z" fill="#fbe69a" stroke="#b88a10" stroke-width="1"/><path d="M1.5 5.5H14.5Q15.5 5.5 15.5 6.5V12.5Q15.5 13.5 14.5 13.5H2.5Q1.5 13.5 1.5 12.5z" fill="url(#fg)" stroke="#b88a10" stroke-width="1"/><path d="M13.5 6V13" stroke="#c89c28" stroke-width="1"/></g></g><rect x="67" y="369" width="8" height="16" fill="#fff"/><path d="M74 374V380H68z" fill="#3a3a3a" stroke="#6a6a6a" stroke-width="0.8" shape-rendering="auto"/><g shape-rendering="auto"><g transform="translate(82 369)"><path d="M1.5 3.5Q1.5 1.5 3.5 1.5H6.5L8 3H12.5Q13.5 3 13.5 4V5.5H1.5z" fill="#fbe69a" stroke="#b88a10" stroke-width="1"/><path d="M1.5 5.5H14.5Q15.5 5.5 15.5 6.5V12.5Q15.5 13.5 14.5 13.5H2.5Q1.5 13.5 1.5 12.5z" fill="url(#fg)" stroke="#b88a10" stroke-width="1"/><path d="M13.5 6V13" stroke="#c89c28" stroke-width="1"/></g></g><rect x="87" y="385" width="8" height="16" fill="#fff"/><path d="M94 390V396H88z" fill="#3a3a3a" stroke="#6a6a6a" stroke-width="0.8" shape-rendering="auto"/><g shape-rendering="auto"><g transform="translate(102 385)"><path d="M1.5 3.5Q1.5 1.5 3.5 1.5H6.5L8 3H12.5Q13.5 3 13.5 4V5.5H1.5z" fill="#fbe69a" stroke="#b88a10" stroke-width="1"/><path d="M1.5 5.5H14.5Q15.5 5.5 15.5 6.5V12.5Q15.5 13.5 14.5 13.5H2.5Q1.5 13.5 1.5 12.5z" fill="url(#fg)" stroke="#b88a10" stroke-width="1"/><path d="M13.5 6V13" stroke="#c89c28" stroke-width="1"/></g></g><g shape-rendering="auto"><g transform="translate(122 401)"><path d="M5.5 -1V7.5M0.5 15.5L2.2 13.8M13.5 10.5H16" stroke="#1c2468" stroke-width="1"/><path d="M8 3.5L9.5 2H12V11.5L10.5 12.8H8z" fill="#3cd23c"/><path d="M10.5 3.5L12 2V11.5L10.5 12.8z" fill="#0e9a0e"/><path d="M8 3.5L9.5 2H12L10.5 3.5z" fill="#90ff90"/><path d="M11.6 8.6L13.6 7.3V11.5L11.6 12.8z" fill="#8888ee"/><path d="M2 9.6H5.5V14.8H2z" fill="#ff3a0a"/><path d="M2 9.6L4.2 7.5H8L5.5 9.6z" fill="#ff6a3a"/><path d="M5.5 9.6L8 7.5V12.8L5.5 14.8z" fill="#b81a06"/></g></g><g shape-rendering="auto"><g transform="translate(122 417)"><path d="M3.5 3.5H14.5V13.5H1.5V5.5z" fill="#e4f2ff" stroke="#3ba0f4" stroke-width="1"/><path d="M1.5 5.5L3.5 3.5V5.5z" fill="#3ba0f4"/><rect x="2" y="8" width="3" height="1.5" fill="#f01010"/><rect x="2" y="10.5" width="3" height="1.5" fill="#f01010"/><path d="M6.6 6V12.8" stroke="#000" stroke-width="1.3"/><rect x="8.2" y="11.5" width="1.3" height="1.3" fill="#000"/><path d="M10.4 7.4Q10.8 6.2 12 6.2Q13.4 6.3 13.3 7.7Q13.2 8.8 10.5 12.2H13.7" stroke="#000" stroke-width="1.2" fill="none"/></g></g><g shape-rendering="auto"><g transform="translate(122 433)"><path d="M3.5 3.5H14.5V13.5H1.5V5.5z" fill="#e4f2ff" stroke="#3ba0f4" stroke-width="1"/><path d="M1.5 5.5L3.5 3.5V5.5z" fill="#3ba0f4"/><rect x="2" y="8" width="3" height="1.5" fill="#f01010"/><rect x="2" y="10.5" width="3" height="1.5" fill="#f01010"/><path d="M6.6 6V12.8" stroke="#000" stroke-width="1.3"/><rect x="8.2" y="11.5" width="1.3" height="1.3" fill="#000"/><path d="M10.4 7.4Q10.8 6.2 12 6.2Q13.4 6.3 13.3 7.7Q13.2 8.8 10.5 12.2H13.7" stroke="#000" stroke-width="1.2" fill="none"/></g></g><g shape-rendering="auto"><g transform="translate(122 449)"><path d="M5.5 -1V7.5M0.5 15.5L2.2 13.8M13.5 10.5H16" stroke="#1c2468" stroke-width="1"/><path d="M8 3.5L9.5 2H12V11.5L10.5 12.8H8z" fill="#3cd23c"/><path d="M10.5 3.5L12 2V11.5L10.5 12.8z" fill="#0e9a0e"/><path d="M8 3.5L9.5 2H12L10.5 3.5z" fill="#90ff90"/><path d="M11.6 8.6L13.6 7.3V11.5L11.6 12.8z" fill="#8888ee"/><path d="M2 9.6H5.5V14.8H2z" fill="#ff3a0a"/><path d="M2 9.6L4.2 7.5H8L5.5 9.6z" fill="#ff6a3a"/><path d="M5.5 9.6L8 7.5V12.8L5.5 14.8z" fill="#b81a06"/></g></g><g shape-rendering="auto"><g transform="translate(122 465)"><path d="M2.5 2V14.6M5.5 2V14.6M8.5 2V14.6M11.5 2V14.6M14.5 2V14.6M1 4.5H16M1 7.5H16M1 10.5H16M1 13.5H16" stroke="#c8c8fa" stroke-width="1"/><path d="M5.5 0V16M0 10.5H16" stroke="#1c2468" stroke-width="1"/><path d="M2.2 12.5L5.4 10.5L7.5 12.5L8.4 9.4L9.5 7.6L11.4 5.2L12.6 6.5L12.6 10.5L13.6 11.8" stroke="#ff2a00" stroke-width="1.1" fill="none"/></g></g><g shape-rendering="auto"><g transform="translate(122 481)"><path d="M3.5 3.5H14.5V13.5H1.5V5.5z" fill="#e4f2ff" stroke="#3ba0f4" stroke-width="1"/><path d="M1.5 5.5L3.5 3.5V5.5z" fill="#3ba0f4"/><rect x="2" y="8" width="3" height="1.5" fill="#f01010"/><rect x="2" y="10.5" width="3" height="1.5" fill="#f01010"/><path d="M6.6 6V12.8" stroke="#000" stroke-width="1.3"/><rect x="8.2" y="11.5" width="1.3" height="1.3" fill="#000"/><path d="M10.4 7.4Q10.8 6.2 12 6.2Q13.4 6.3 13.3 7.7Q13.2 8.8 10.5 12.2H13.7" stroke="#000" stroke-width="1.2" fill="none"/></g></g><rect x="87" y="497" width="8" height="16" fill="#fff"/><path d="M94 502V508H88z" fill="#3a3a3a" stroke="#6a6a6a" stroke-width="0.8" shape-rendering="auto"/><g shape-rendering="auto"><g transform="translate(102 497)"><path d="M1.5 3.5Q1.5 1.5 3.5 1.5H6.5L8 3H12.5Q13.5 3 13.5 4V5.5H1.5z" fill="#fbe69a" stroke="#b88a10" stroke-width="1"/><path d="M1.5 5.5H14.5Q15.5 5.5 15.5 6.5V12.5Q15.5 13.5 14.5 13.5H2.5Q1.5 13.5 1.5 12.5z" fill="url(#fg)" stroke="#b88a10" stroke-width="1"/><path d="M13.5 6V13" stroke="#c89c28" stroke-width="1"/></g></g><g shape-rendering="auto"><g transform="translate(122 513)"><path d="M5.5 -1V7.5M0.5 15.5L2.2 13.8M13.5 10.5H16" stroke="#1c2468" stroke-width="1"/><path d="M8 3.5L9.5 2H12V11.5L10.5 12.8H8z" fill="#3cd23c"/><path d="M10.5 3.5L12 2V11.5L10.5 12.8z" fill="#0e9a0e"/><path d="M8 3.5L9.5 2H12L10.5 3.5z" fill="#90ff90"/><path d="M11.6 8.6L13.6 7.3V11.5L11.6 12.8z" fill="#8888ee"/><path d="M2 9.6H5.5V14.8H2z" fill="#ff3a0a"/><path d="M2 9.6L4.2 7.5H8L5.5 9.6z" fill="#ff6a3a"/><path d="M5.5 9.6L8 7.5V12.8L5.5 14.8z" fill="#b81a06"/></g></g><g shape-rendering="auto"><g transform="translate(122 529)"><path d="M5.5 -1V7.5M0.5 15.5L2.2 13.8M13.5 10.5H16" stroke="#1c2468" stroke-width="1"/><path d="M8 3.5L9.5 2H12V11.5L10.5 12.8H8z" fill="#3cd23c"/><path d="M10.5 3.5L12 2V11.5L10.5 12.8z" fill="#0e9a0e"/><path d="M8 3.5L9.5 2H12L10.5 3.5z" fill="#90ff90"/><path d="M11.6 8.6L13.6 7.3V11.5L11.6 12.8z" fill="#8888ee"/><path d="M2 9.6H5.5V14.8H2z" fill="#ff3a0a"/><path d="M2 9.6L4.2 7.5H8L5.5 9.6z" fill="#ff6a3a"/><path d="M5.5 9.6L8 7.5V12.8L5.5 14.8z" fill="#b81a06"/></g></g><g shape-rendering="auto"><g transform="translate(122 545)"><path d="M2.5 2V14.6M5.5 2V14.6M8.5 2V14.6M11.5 2V14.6M14.5 2V14.6M1 4.5H16M1 7.5H16M1 10.5H16M1 13.5H16" stroke="#c8c8fa" stroke-width="1"/><path d="M5.5 0V16M0 10.5H16" stroke="#1c2468" stroke-width="1"/><path d="M2.2 12.5L5.4 10.5L7.5 12.5L8.4 9.4L9.5 7.6L11.4 5.2L12.6 6.5L12.6 10.5L13.6 11.8" stroke="#ff2a00" stroke-width="1.1" fill="none"/></g></g><g shape-rendering="auto"><g transform="translate(122 561)"><path d="M5.5 -1V7.5M0.5 15.5L2.2 13.8M13.5 10.5H16" stroke="#1c2468" stroke-width="1"/><path d="M8 3.5L9.5 2H12V11.5L10.5 12.8H8z" fill="#3cd23c"/><path d="M10.5 3.5L12 2V11.5L10.5 12.8z" fill="#0e9a0e"/><path d="M8 3.5L9.5 2H12L10.5 3.5z" fill="#90ff90"/><path d="M11.6 8.6L13.6 7.3V11.5L11.6 12.8z" fill="#8888ee"/><path d="M2 9.6H5.5V14.8H2z" fill="#ff3a0a"/><path d="M2 9.6L4.2 7.5H8L5.5 9.6z" fill="#ff6a3a"/><path d="M5.5 9.6L8 7.5V12.8L5.5 14.8z" fill="#b81a06"/></g></g><g shape-rendering="auto"><g transform="translate(122 577)"><path d="M5.5 -1V7.5M0.5 15.5L2.2 13.8M13.5 10.5H16" stroke="#1c2468" stroke-width="1"/><path d="M8 3.5L9.5 2H12V11.5L10.5 12.8H8z" fill="#3cd23c"/><path d="M10.5 3.5L12 2V11.5L10.5 12.8z" fill="#0e9a0e"/><path d="M8 3.5L9.5 2H12L10.5 3.5z" fill="#90ff90"/><path d="M11.6 8.6L13.6 7.3V11.5L11.6 12.8z" fill="#8888ee"/><path d="M2 9.6H5.5V14.8H2z" fill="#ff3a0a"/><path d="M2 9.6L4.2 7.5H8L5.5 9.6z" fill="#ff6a3a"/><path d="M5.5 9.6L8 7.5V12.8L5.5 14.8z" fill="#b81a06"/></g></g><g shape-rendering="auto"><g transform="translate(122 593)"><path d="M5.5 -1V7.5M0.5 15.5L2.2 13.8M13.5 10.5H16" stroke="#1c2468" stroke-width="1"/><path d="M8 3.5L9.5 2H12V11.5L10.5 12.8H8z" fill="#3cd23c"/><path d="M10.5 3.5L12 2V11.5L10.5 12.8z" fill="#0e9a0e"/><path d="M8 3.5L9.5 2H12L10.5 3.5z" fill="#90ff90"/><path d="M11.6 8.6L13.6 7.3V11.5L11.6 12.8z" fill="#8888ee"/><path d="M2 9.6H5.5V14.8H2z" fill="#ff3a0a"/><path d="M2 9.6L4.2 7.5H8L5.5 9.6z" fill="#ff6a3a"/><path d="M5.5 9.6L8 7.5V12.8L5.5 14.8z" fill="#b81a06"/></g></g><rect x="87" y="609" width="8" height="16" fill="#fff"/><path d="M94 614V620H88z" fill="#3a3a3a" stroke="#6a6a6a" stroke-width="0.8" shape-rendering="auto"/><g shape-rendering="auto"><g transform="translate(102 609)"><path d="M1.5 3.5Q1.5 1.5 3.5 1.5H6.5L8 3H12.5Q13.5 3 13.5 4V5.5H1.5z" fill="#fbe69a" stroke="#b88a10" stroke-width="1"/><path d="M1.5 5.5H14.5Q15.5 5.5 15.5 6.5V12.5Q15.5 13.5 14.5 13.5H2.5Q1.5 13.5 1.5 12.5z" fill="url(#fg)" stroke="#b88a10" stroke-width="1"/><path d="M13.5 6V13" stroke="#c89c28" stroke-width="1"/></g></g><rect x="107" y="625" width="8" height="16" fill="#fff"/><path d="M114 630V636H108z" fill="#3a3a3a" stroke="#6a6a6a" stroke-width="0.8" shape-rendering="auto"/><g shape-rendering="auto"><g transform="translate(122 625)"><path d="M1.5 3.5Q1.5 1.5 3.5 1.5H6.5L8 3H12.5Q13.5 3 13.5 4V5.5H1.5z" fill="#fbe69a" stroke="#b88a10" stroke-width="1"/><path d="M1.5 5.5H14.5Q15.5 5.5 15.5 6.5V12.5Q15.5 13.5 14.5 13.5H2.5Q1.5 13.5 1.5 12.5z" fill="url(#fg)" stroke="#b88a10" stroke-width="1"/><path d="M13.5 6V13" stroke="#c89c28" stroke-width="1"/></g></g><g shape-rendering="auto"><g transform="translate(142 641)"><path d="M3.5 3.5H14.5V13.5H1.5V5.5z" fill="#e4f2ff" stroke="#3ba0f4" stroke-width="1"/><path d="M1.5 5.5L3.5 3.5V5.5z" fill="#3ba0f4"/><rect x="2" y="8" width="3" height="1.5" fill="#f01010"/><rect x="2" y="10.5" width="3" height="1.5" fill="#f01010"/><path d="M6.6 6V12.8" stroke="#000" stroke-width="1.3"/><rect x="8.2" y="11.5" width="1.3" height="1.3" fill="#000"/><path d="M10.4 7.4Q10.8 6.2 12 6.2Q13.4 6.3 13.3 7.7Q13.2 8.8 10.5 12.2H13.7" stroke="#000" stroke-width="1.2" fill="none"/></g></g><g shape-rendering="auto"><g transform="translate(142 657)"><path d="M2.5 2V14.6M5.5 2V14.6M8.5 2V14.6M11.5 2V14.6M14.5 2V14.6M1 4.5H16M1 7.5H16M1 10.5H16M1 13.5H16" stroke="#c8c8fa" stroke-width="1"/><path d="M5.5 0V16M0 10.5H16" stroke="#1c2468" stroke-width="1"/><path d="M2.2 12.5L5.4 10.5L7.5 12.5L8.4 9.4L9.5 7.6L11.4 5.2L12.6 6.5L12.6 10.5L13.6 11.8" stroke="#ff2a00" stroke-width="1.1" fill="none"/></g></g></svg><div class="t" style="left:66px;top:4px;font-size:11px">Время прогрева при повт. пуске</div><div class="t" style="left:46px;top:20px;font-size:11px">Холостой ход</div><div class="t" style="left:66px;top:36px;font-size:11px">Коэффициент топливоподачи на ХХ</div><div class="t" style="left:66px;top:52px;font-size:11px">Пропорциональный регулятор времени впрыска</div><div class="t" style="left:66px;top:68px;font-size:11px">УОЗ на ХХ</div><div class="t" style="left:66px;top:84px;font-size:11px">Корр. УОЗ ХХ по ТОЖ</div><div class="t" style="left:66px;top:100px;font-size:11px">Проп.коэфф.регулятора УОЗ  (малое рассогласование)</div><div class="t" style="left:66px;top:116px;font-size:11px">Проп.коэфф.регулятора УОЗ 1 (большое рассогласование)</div><div class="t" style="left:66px;top:132px;font-size:11px">Проп.коэфф.регулятора УОЗ 2 (большое рассогласование)</div><div class="t" style="left:66px;top:148px;font-size:11px">Коррекция проп.коэфф.регулятора УОЗ 1</div><div class="t" style="left:66px;top:164px;font-size:11px">Коррекция проп.коэфф.регулятора УОЗ 2</div><div class="t" style="left:66px;top:180px;font-size:11px">Множитель проп.коэфф. (dRPM>0) 1</div><div class="t" style="left:66px;top:196px;font-size:11px">Множитель проп.коэфф. (dRPM>0) 2</div><div class="t" style="left:46px;top:212px;font-size:11px">Рабочие режимы</div><div class="t" style="left:66px;top:228px;font-size:11px">Топливоподача</div><div class="t" style="left:86px;top:244px;font-size:11px">Обогащение по смещению УОЗ</div><div class="t" style="left:106px;top:260px;font-size:11px">Порог по GBC для отмены 'большого</div><div class="t" style="left:106px;top:276px;font-size:11px">Гистерезис GBC для отмены 'большого</div><div class="t" style="left:106px;top:292px;font-size:11px">Порог dUOZ для детект.'большого'</div><div class="t" style="left:106px;top:308px;font-size:11px">Базовое обогащение по RPM-GBC</div><div class="t" style="left:106px;top:324px;font-size:11px">Базовое обогащение по dUOZ</div><div class="t" style="left:106px;top:340px;font-size:11px">Скорость изменения обогащения</div><div class="t" style="left:86px;top:356px;font-size:11px">Послепусковая коррекция времени</div><div class="t" style="left:106px;top:372px;font-size:11px">Коэфф.обогащения по температуре</div><div class="t" style="left:106px;top:388px;font-size:11px">Коэфф.обогащения по температуре</div><div class="t" style="left:106px;top:404px;font-size:11px">Коэфф.быстрого повторного пуска</div><div class="t" style="left:106px;top:420px;font-size:11px">Коэфф.обогащения по времени 1</div><div class="t" style="left:106px;top:436px;font-size:11px">Коэфф.обогащения по времени 2</div><div class="t" style="left:106px;top:452px;font-size:11px">Коэфф.обогащения по адаптации</div><div class="t" style="left:86px;top:468px;font-size:11px">Динамическая коррекция переходных</div><div class="t" style="left:106px;top:484px;font-size:11px">Послепусковая коррекция топлива</div><div class="t" style="left:126px;top:500px;font-size:11px">Число циклов послепусковой</div><div class="t" style="left:126px;top:516px;font-size:11px">Коэфф.коррекции по циклам</div></div><div class="a" style="left:311px;top:144px;width:17px;height:533px;background:#f0f0f0;border-left:1px solid #e8e8e8"></div><svg style="left:311px;top:144px" width="17" height="17"><path d="M4.5 11.5L8.5 7.5L12.5 11.5z" fill="#3c3c3c"/></svg><svg style="left:311px;top:660px" width="17" height="17"><path d="M4.5 6.5L8.5 10.5L12.5 6.5z" fill="#3c3c3c"/></svg><div class="a" style="left:312px;top:259px;width:14px;height:79px;border:1px solid #9a9a9a;border-radius:2px;background:linear-gradient(to right,#f2f2f2,#e6e6e6 50%,#d4d4d4)"></div><div class="a" style="left:315px;top:294px;width:7px;height:7px;border-top:1px solid #6a6a6a;border-bottom:1px solid #6a6a6a;box-shadow:inset 0 2px 0 #fff"></div><div class="a" style="left:315px;top:297px;width:7px;height:1px;background:#6a6a6a"></div><div class="a" style="left:37px;top:677px;width:291px;height:16px;background:#f0f0f0"></div><svg style="left:37px;top:677px" width="17" height="16"><path d="M11.5 4L7.5 8L11.5 12z" fill="#3c3c3c"/></svg><svg style="left:294px;top:677px" width="17" height="16"><path d="M6.5 4L10.5 8L6.5 12z" fill="#3c3c3c"/></svg><div class="a" style="left:65px;top:678px;width:135px;height:15px;border:1px solid #9a9a9a;border-radius:2px;background:linear-gradient(#f4f4f4,#e8e8e8 50%,#d6d6d6)"></div><div class="a" style="left:128px;top:682px;width:1px;height:6px;background:#555;box-shadow:2px 0 0 #555,4px 0 0 #555"></div><div class="a" style="left:311px;top:677px;width:17px;height:16px;background:#f0f0f0"></div></div></body></html>
